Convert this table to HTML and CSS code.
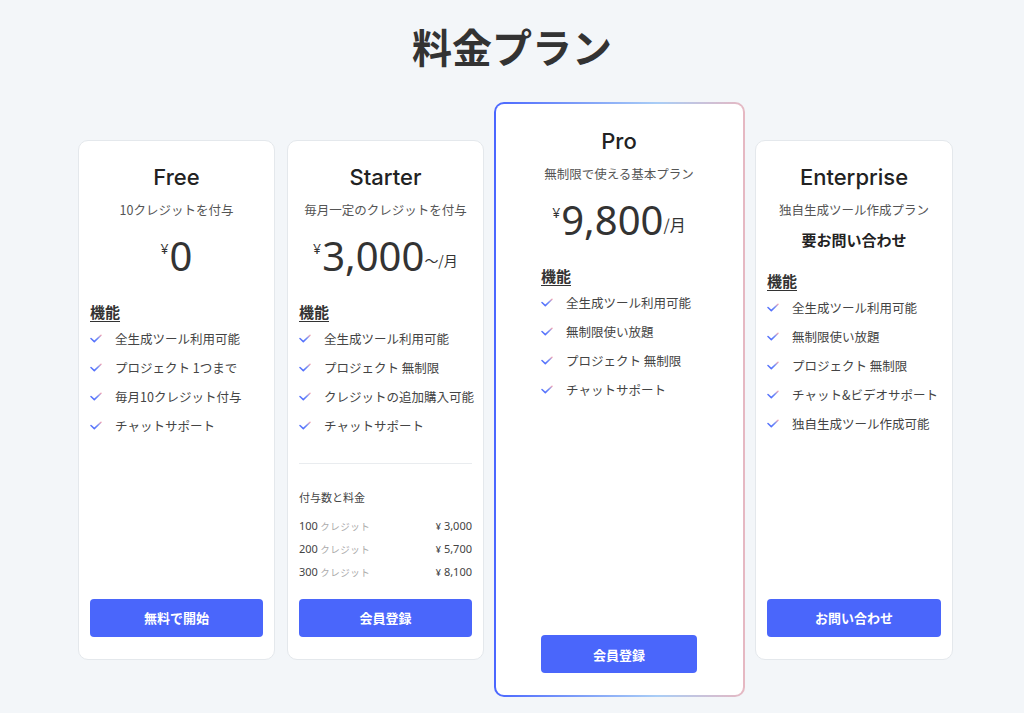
FILE: index.html
```html
<!DOCTYPE html>
<html lang="ja">
<head>
<meta charset="utf-8">
<title>料金プラン</title>
<link rel="stylesheet" href="styles.css">
</head>
<body>
<svg width="0" height="0" class="defs" aria-hidden="true">
  <defs>
    <linearGradient id="chk" x1="0" y1="1" x2="1" y2="0">
      <stop offset="0" stop-color="#4a66ff"/>
      <stop offset="0.6" stop-color="#6f8cf7"/>
      <stop offset="1" stop-color="#f0a6b6"/>
    </linearGradient>
  </defs>
</svg>
<h1 class="page-title">料金プラン</h1>
<div class="plans">
  <section class="card">
    <h2 class="plan-name">Free</h2>
    <p class="plan-sub">10クレジットを付与</p>
    <div class="price"><span class="yen">¥</span><span class="num">0</span></div>
    <h3 class="feat-title">機能</h3>
    <ul class="features">
      <li><svg class="check" viewBox="0 0 12 9"><polyline points="1,4.5 4.3,7.6 11,1.2"/></svg>全生成ツール利用可能</li>
      <li><svg class="check" viewBox="0 0 12 9"><polyline points="1,4.5 4.3,7.6 11,1.2"/></svg>プロジェクト 1つまで</li>
      <li><svg class="check" viewBox="0 0 12 9"><polyline points="1,4.5 4.3,7.6 11,1.2"/></svg>毎月10クレジット付与</li>
      <li><svg class="check" viewBox="0 0 12 9"><polyline points="1,4.5 4.3,7.6 11,1.2"/></svg>チャットサポート</li>
    </ul>
    <a class="btn" href="#">無料で開始</a>
  </section>

  <section class="card card-starter">
    <h2 class="plan-name">Starter</h2>
    <p class="plan-sub">毎月一定のクレジットを付与</p>
    <div class="price"><span class="yen">¥</span><span class="num">3,000</span><span class="per per-s">〜/月</span></div>
    <h3 class="feat-title">機能</h3>
    <ul class="features">
      <li><svg class="check" viewBox="0 0 12 9"><polyline points="1,4.5 4.3,7.6 11,1.2"/></svg>全生成ツール利用可能</li>
      <li><svg class="check" viewBox="0 0 12 9"><polyline points="1,4.5 4.3,7.6 11,1.2"/></svg>プロジェクト 無制限</li>
      <li><svg class="check" viewBox="0 0 12 9"><polyline points="1,4.5 4.3,7.6 11,1.2"/></svg>クレジットの追加購入可能</li>
      <li><svg class="check" viewBox="0 0 12 9"><polyline points="1,4.5 4.3,7.6 11,1.2"/></svg>チャットサポート</li>
    </ul>
    <div class="credits">
      <p class="credits-title">付与数と料金</p>
      <div class="credit-row"><span><span class="cnum">100</span> <span class="cunit">クレジット</span></span><span class="cprice"><span class="cyen">¥</span> 3,000</span></div>
      <div class="credit-row"><span><span class="cnum">200</span> <span class="cunit">クレジット</span></span><span class="cprice"><span class="cyen">¥</span> 5,700</span></div>
      <div class="credit-row"><span><span class="cnum">300</span> <span class="cunit">クレジット</span></span><span class="cprice"><span class="cyen">¥</span> 8,100</span></div>
    </div>
    <a class="btn" href="#">会員登録</a>
  </section>

  <section class="card card-pro">
    <h2 class="plan-name">Pro</h2>
    <p class="plan-sub">無制限で使える基本プラン</p>
    <div class="price"><span class="yen">¥</span><span class="num">9,800</span><span class="per">/月</span></div>
    <h3 class="feat-title">機能</h3>
    <ul class="features">
      <li><svg class="check" viewBox="0 0 12 9"><polyline points="1,4.5 4.3,7.6 11,1.2"/></svg>全生成ツール利用可能</li>
      <li><svg class="check" viewBox="0 0 12 9"><polyline points="1,4.5 4.3,7.6 11,1.2"/></svg>無制限使い放題</li>
      <li><svg class="check" viewBox="0 0 12 9"><polyline points="1,4.5 4.3,7.6 11,1.2"/></svg>プロジェクト 無制限</li>
      <li><svg class="check" viewBox="0 0 12 9"><polyline points="1,4.5 4.3,7.6 11,1.2"/></svg>チャットサポート</li>
    </ul>
    <a class="btn" href="#">会員登録</a>
  </section>

  <section class="card card-ent">
    <h2 class="plan-name">Enterprise</h2>
    <p class="plan-sub">独自生成ツール作成プラン</p>
    <p class="contact">要お問い合わせ</p>
    <h3 class="feat-title">機能</h3>
    <ul class="features">
      <li><svg class="check" viewBox="0 0 12 9"><polyline points="1,4.5 4.3,7.6 11,1.2"/></svg>全生成ツール利用可能</li>
      <li><svg class="check" viewBox="0 0 12 9"><polyline points="1,4.5 4.3,7.6 11,1.2"/></svg>無制限使い放題</li>
      <li><svg class="check" viewBox="0 0 12 9"><polyline points="1,4.5 4.3,7.6 11,1.2"/></svg>プロジェクト 無制限</li>
      <li><svg class="check" viewBox="0 0 12 9"><polyline points="1,4.5 4.3,7.6 11,1.2"/></svg>チャット&amp;ビデオサポート</li>
      <li><svg class="check" viewBox="0 0 12 9"><polyline points="1,4.5 4.3,7.6 11,1.2"/></svg>独自生成ツール作成可能</li>
    </ul>
    <a class="btn" href="#">お問い合わせ</a>
  </section>
</div>
</body>
</html>
```

FILE: styles.css
```css
* { box-sizing: border-box; }

html, body {
  margin: 0;
  padding: 0;
}

body {
  background: #f3f6f9;
  font-family: "Noto Sans", "Noto Sans CJK JP", sans-serif;
  color: #333;
  width: 1024px;
  height: 713px;
  overflow: hidden;
}

.defs {
  position: absolute;
  width: 0;
  height: 0;
}

.page-title {
  margin: 18px 0 0;
  text-align: center;
  font-family: "Noto Sans CJK JP", sans-serif;
  font-weight: 700;
  font-size: 40px;
  line-height: 56px;
  color: #333;
}

.plans {
  margin-top: 28px;
  display: flex;
  align-items: center;
  padding-left: 78px;
  height: 595px;
}

.card {
  width: 197px;
  height: 520px;
  background: #fff;
  border: 1px solid #e4e8ec;
  border-radius: 10px;
  padding: 21px 11px 22px;
  display: flex;
  flex-direction: column;
  flex: none;
}

.card-starter {
  margin-left: 12px;
}

.card-ent {
  width: 198px;
  margin-left: 10px;
}

.card-pro {
  width: 251px;
  height: 595px;
  margin-left: 10px;
  border: 2px solid transparent;
  background:
    linear-gradient(#fff, #fff) padding-box,
    linear-gradient(90deg, #4a66ff 0%, #7f9ff8 35%, #a9cdf6 65%, #e6b8c2 100%) border-box;
  padding: 22px 46px 22px 45px;
}

.plan-name {
  margin: 0;
  text-align: center;
  font-family: "Inter", "Noto Sans", sans-serif;
  font-weight: 500;
  font-size: 22px;
  line-height: 30px;
  color: #222;
}

.plan-sub {
  margin: 8px 0 0;
  text-align: center;
  font-family: "Noto Sans CJK JP", sans-serif;
  font-size: 12.5px;
  line-height: 20px;
  color: #555;
}

.price {
  margin-top: 12px;
  display: flex;
  justify-content: center;
  align-items: flex-start;
  height: 48px;
  line-height: 48px;
  color: #333;
}

.yen {
  font-size: 14px;
  line-height: 14px;
  margin-top: 10px;
  margin-right: 1px;
}

.num {
  font-family: "Noto Sans", sans-serif;
  font-size: 40px;
  line-height: 48px;
  font-weight: 400;
}

.per {
  font-family: "Noto Sans CJK JP", sans-serif;
  font-size: 16px;
  line-height: 16px;
  align-self: flex-end;
  margin-bottom: 12px;
}

.per-s {
  font-size: 14px;
}

.contact {
  margin: 9px 0 0;
  text-align: center;
  font-family: "Noto Sans CJK JP", sans-serif;
  font-weight: 700;
  font-size: 15px;
  line-height: 22px;
  color: #222;
}

.feat-title {
  margin: 21px 0 0;
  font-family: "Noto Sans CJK JP", sans-serif;
  font-weight: 700;
  font-size: 15px;
  line-height: 22px;
  color: #333;
  text-decoration: underline;
  text-underline-offset: 3px;
}

.contact + .feat-title {
  margin-top: 19px;
}

.features {
  list-style: none;
  margin: 1px 0 0;
  padding: 0;
}

.features li {
  display: flex;
  align-items: center;
  height: 29px;
  font-family: "Noto Sans CJK JP", sans-serif;
  font-size: 12.5px;
  color: #444;
  white-space: nowrap;
}

.check {
  width: 12px;
  height: 9px;
  margin-right: 13px;
  flex: none;
  fill: none;
  stroke: url(#chk);
  stroke-width: 1.5;
  stroke-linecap: round;
  stroke-linejoin: round;
}

.credits {
  margin-top: 23px;
  border-top: 1px solid #e9ecef;
  padding-top: 25px;
  font-family: "Noto Sans CJK JP", sans-serif;
}

.credits-title {
  margin: 0 0 9px;
  font-size: 11px;
  line-height: 16px;
  color: #444;
}

.credit-row {
  display: flex;
  justify-content: space-between;
  align-items: center;
  height: 23px;
  font-size: 11px;
  color: #444;
}

.cnum {
  font-family: "Noto Sans", sans-serif;
  font-size: 11px;
}

.cunit {
  font-size: 9.5px;
  color: #aaa;
  letter-spacing: 0.5px;
}

.cprice {
  font-family: "Noto Sans", sans-serif;
  font-size: 11px;
}

.cyen {
  font-size: 9px;
}

.btn {
  margin-top: auto;
  display: flex;
  align-items: center;
  justify-content: center;
  height: 38px;
  background: #4a66fb;
  color: #fff;
  border-radius: 4px;
  text-decoration: none;
  font-family: "Noto Sans CJK JP", sans-serif;
  font-weight: 700;
  font-size: 13px;
}
```
